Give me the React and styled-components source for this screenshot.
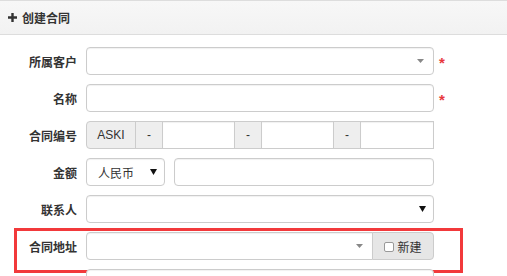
import React from 'react';
import styled, {createGlobalStyle} from 'styled-components';

const GlobalStyle = createGlobalStyle`
  html, body {
    margin: 0;
    padding: 0;
    overflow: hidden;
    background: #fff;
  }
  body {
    font-family: "Liberation Sans", "Noto Sans CJK SC", sans-serif;
    font-size: 12px;
    color: #333;
  }
  * { box-sizing: border-box; }
`;

const Panel = styled.div`
  border-top: 1px solid #ddd;
`;

const Heading = styled.div`
  height: 34px;
  display: flex;
  align-items: center;
  gap: 5px;
  padding: 0 8px 1px;
  background: linear-gradient(#f7f7f7, #f2f2f2);
  border-bottom: 1px solid #ddd;
  font-weight: bold;
  font-size: 12px;
  color: #333;
`;

const Form = styled.div`
  padding-top: 12px;
`;

const Row = styled.div`
  position: relative;
  display: flex;
  align-items: center;
  height: 28px;
  margin-bottom: 9px;

  ${p => p.$highlight && `
    &::after {
      content: '';
      position: absolute;
      left: 14px;
      top: -4px;
      width: 443px;
      height: 39px;
      border: 3px solid #f2393b;
      pointer-events: none;
    }
  `}
`;

const Label = styled.div`
  width: 86px;
  padding-right: 9px;
  text-align: right;
  font-weight: bold;
  font-size: 12px;
  color: #333;
`;

const Control = styled.div`
  display: flex;
  align-items: center;
  width: 348px;
  height: 28px;
`;

const Box = styled.div`
  position: relative;
  display: flex;
  align-items: center;
  width: ${p => p.$w ? `${p.$w}px` : '100%'};
  height: 28px;
  margin-left: ${p => p.$ml || 0}px;
  padding: 0 11px;
  background: #fff;
  border: 1px solid #ccc;
  border-radius: ${p => p.$radius || '4px'};
  box-shadow: inset 0 1px 1px rgba(0, 0, 0, 0.06);
  font-size: 12px;
  color: #333;
`;

const Addon = styled.div`
  display: flex;
  align-items: center;
  justify-content: center;
  width: ${p => p.$w}px;
  height: 28px;
  margin-left: ${p => p.$ml || 0}px;
  background: #eee;
  border: 1px solid #ccc;
  border-radius: ${p => p.$radius || '0'};
  font-size: 12px;
  color: #333;
`;

const Required = styled.span`
  margin-left: 5px;
  margin-top: 2px;
  color: #e8383d;
  font-size: 15px;
  font-weight: bold;
`;

const Caret = styled.svg`
  position: absolute;
  right: ${p => p.$right}px;
  top: 50%;
  transform: translateY(-50%);
`;

const NewButton = styled.div`
  display: flex;
  align-items: center;
  justify-content: center;
  gap: 3px;
  width: 62px;
  height: 28px;
  margin-left: -1px;
  background: #e6e6e6;
  border: 1px solid #ccc;
  border-radius: 0 4px 4px 0;
  font-size: 12px;
  color: #333;
`;

const Check = styled.span`
  width: 10px;
  height: 10px;
  border: 1px solid #999;
  border-radius: 2px;
  background: #fff;
  margin-top: 1px;
`;

const PlusIcon = () => (
  <svg width="9" height="9" viewBox="0 0 9 9">
    <path d="M4.5 0v9M0 4.5h9" stroke="#333" strokeWidth="2.4"/>
  </svg>
);

const SoftCaret = ({right = 10}) => (
  <Caret $right={right} width="7" height="4" viewBox="0 0 7 4">
    <path d="M0 0h7L3.5 4z" fill="#888"/>
  </Caret>
);

const HardCaret = ({right = 7}) => (
  <Caret $right={right} width="7" height="6" viewBox="0 0 7 6">
    <path d="M0 0h7L3.5 6z" fill="#111"/>
  </Caret>
);

export default function App() {
  return (
    <>
      <GlobalStyle/>
      <Panel>
        <Heading><PlusIcon/>创建合同</Heading>
        <Form>
          <Row>
            <Label>所属客户</Label>
            <Control><Box><SoftCaret right={9}/></Box></Control>
            <Required>*</Required>
          </Row>
          <Row>
            <Label>名称</Label>
            <Control><Box/></Control>
            <Required>*</Required>
          </Row>
          <Row>
            <Label>合同编号</Label>
            <Control>
              <Addon $w={50} $radius="4px 0 0 4px">ASKI</Addon>
              <Addon $w={28} $ml={-1}>-</Addon>
              <Box $w={73} $ml={-1} $radius="0"/>
              <Addon $w={28} $ml={-1}>-</Addon>
              <Box $w={73} $ml={-1} $radius="0"/>
              <Addon $w={28} $ml={-1}>-</Addon>
              <Box $w={74} $ml={-1} $radius="0"/>
            </Control>
          </Row>
          <Row>
            <Label>金额</Label>
            <Control>
              <Box $w={79}>人民币<HardCaret right={7}/></Box>
              <Box $w={260} $ml={9}/>
            </Control>
          </Row>
          <Row>
            <Label>联系人</Label>
            <Control><Box><HardCaret right={7}/></Box></Control>
          </Row>
          <Row $highlight>
            <Label>合同地址</Label>
            <Control>
              <Box $w={287} $radius="4px 0 0 4px"><SoftCaret right={9}/></Box>
              <NewButton><Check/>新建</NewButton>
            </Control>
          </Row>
          <Row>
            <Label/>
            <Control><Box/></Control>
          </Row>
        </Form>
      </Panel>
    </>
  );
}
